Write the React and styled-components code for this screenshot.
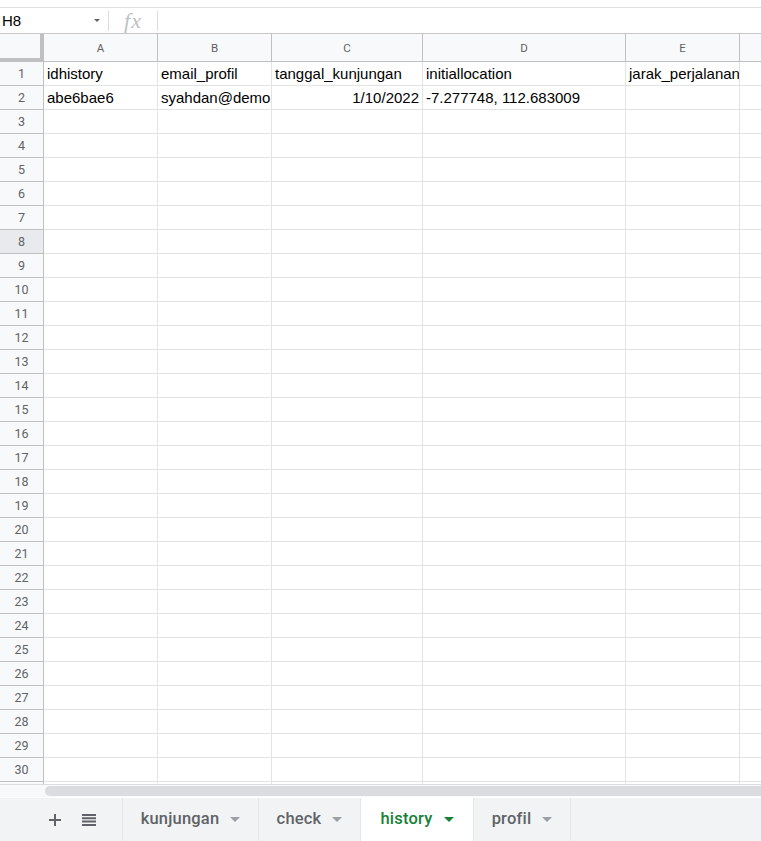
import React from "react";
import styled, { createGlobalStyle } from "styled-components";

const Global = createGlobalStyle`
  html, body { margin: 0; padding: 0; background: #fff; }
  body { font-family: "Liberation Sans", Arial, sans-serif; }
  * { box-sizing: border-box; }
`;

const Page = styled.div`
  width: 761px;
  height: 841px;
  display: flex;
  flex-direction: column;
  overflow: hidden;
  background: #fff;
`;

const TopSpace = styled.div`
  height: 8px;
  flex: none;
  border-bottom: 1px solid #e0e0e0;
`;

const FormulaBar = styled.div`
  height: 26px;
  flex: none;
  display: flex;
  align-items: center;
  border-bottom: 1px solid #c7c7c7;
`;

const NameBox = styled.div`
  width: 108px;
  height: 100%;
  display: flex;
  align-items: center;
  justify-content: space-between;
  padding: 0 8px 0 2px;
  font-family: "Liberation Sans", Arial, sans-serif;
  font-size: 15px;
  color: #000;
`;

const SmallCaret = styled.span`
  width: 0;
  height: 0;
  border-left: 3px solid transparent;
  border-right: 3px solid transparent;
  border-top: 3px solid #5f6368;
  display: inline-block;
`;

const Divider = styled.div`
  width: 1px;
  height: 20px;
  background: #dadce0;
`;

const Fx = styled.div`
  width: 48px;
  text-align: center;
  font-family: "Liberation Serif", "Times New Roman", serif;
  font-style: italic;
  font-size: 22px;
  color: #bdc1c6;
  line-height: 26px;
  letter-spacing: 1px;
`;

const GridArea = styled.div`
  flex: 1;
  overflow: hidden;
`;

const COLS = [114, 114, 151, 203, 114, 114];
const template = `44px ${COLS.map((c) => c + "px").join(" ")}`;

const Grid = styled.div`
  display: grid;
  grid-template-columns: ${template};
  grid-template-rows: 28px;
  grid-auto-rows: 24px;
`;

const Corner = styled.div`
  background: #f8f9fa;
  border-right: 4px solid #c0c0c0;
  border-bottom: 4px solid #c0c0c0;
`;

const ColHead = styled.div`
  background: #f8f9fa;
  border-right: 1px solid #c0c0c0;
  border-bottom: 1px solid #c0c0c0;
  display: flex;
  align-items: center;
  justify-content: center;
  font-family: Roboto, "Liberation Sans", sans-serif;
  font-size: 11.5px;
  color: #5f6368;
  padding-top: 1px;
`;

const RowHead = styled.div`
  background: ${(p) => (p.$active ? "#e8eaed" : "#f8f9fa")};
  border-right: 1px solid #c0c0c0;
  border-bottom: 1px solid #c0c0c0;
  display: flex;
  align-items: center;
  justify-content: center;
  font-family: Roboto, "Liberation Sans", sans-serif;
  font-size: 12.5px;
  color: #5f6368;
`;

const Cell = styled.div`
  border-right: 1px solid #e2e3e3;
  border-bottom: 1px solid #e2e3e3;
  padding: 0 3px;
  font-family: "Liberation Sans", Arial, sans-serif;
  font-size: 15px;
  color: #000;
  line-height: 23px;
  white-space: nowrap;
  overflow: hidden;
  text-align: ${(p) => (p.$right ? "right" : "left")};
`;

const ScrollTrack = styled.div`
  height: 14px;
  flex: none;
  display: flex;
  align-items: center;
  background: #f8f9fa;
  border-top: 1px solid #dadce0;
  border-bottom: 1px solid #fff;
  padding-left: 45px;
`;

const ScrollThumb = styled.div`
  flex: 1;
  height: 10px;
  background: #dadce0;
  border-radius: 5px 0 0 5px;
`;

const TabBar = styled.div`
  height: 43px;
  flex: none;
  background: #f1f3f4;
  display: flex;
  align-items: stretch;
`;

const Tools = styled.div`
  width: 123px;
  display: flex;
  align-items: center;
  padding-left: 48px;
  gap: 20px;
  border-right: 1px solid #e4e6e8;
`;

const Tab = styled.div`
  width: ${(p) => p.$w}px;
  display: flex;
  align-items: center;
  justify-content: center;
  gap: 11px;
  background: ${(p) => (p.$active ? "#fff" : "transparent")};
  border-right: 1px solid #e4e6e8;
  font-family: Roboto, "Open Sans", sans-serif;
  font-weight: 500;
  font-size: 16.5px;
  letter-spacing: 0.2px;
  color: ${(p) => (p.$active ? "#188038" : "#5f6368")};
  padding-bottom: 2px;
`;

const TabCaret = styled.span`
  width: 0;
  height: 0;
  border-left: 5px solid transparent;
  border-right: 5px solid transparent;
  border-top: 5px solid ${(p) => (p.$active ? "#188038" : "#9aa0a6")};
  margin-top: 2px;
`;

const data = {
  1: ["idhistory", "email_profil", "tanggal_kunjungan", "initiallocation", "jarak_perjalanan", ""],
  2: ["abe6bae6", "syahdan@demo.com", { v: "1/10/2022", r: true }, "-7.277748, 112.683009", "", ""],
};

export default function App() {
  const rows = [];
  for (let r = 1; r <= 31; r++) {
    rows.push(
      <RowHead key={"h" + r} $active={r === 8}>
        {r <= 30 ? r : ""}
      </RowHead>
    );
    COLS.forEach((_, c) => {
      const val = data[r] ? data[r][c] : "";
      const isObj = val && typeof val === "object";
      rows.push(
        <Cell key={r + "-" + c} $right={isObj && val.r}>
          {isObj ? val.v : val}
        </Cell>
      );
    });
  }
  return (
    <Page>
      <Global />
      <TopSpace />
      <FormulaBar>
        <NameBox>
          <span>H8</span>
          <SmallCaret />
        </NameBox>
        <Divider />
        <Fx>fx</Fx>
        <Divider />
      </FormulaBar>
      <GridArea>
        <Grid>
          <Corner />
          {["A", "B", "C", "D", "E", ""].map((l, i) => (
            <ColHead key={i}>{l}</ColHead>
          ))}
          {rows}
        </Grid>
      </GridArea>
      <ScrollTrack>
        <ScrollThumb />
      </ScrollTrack>
      <TabBar>
        <Tools>
          <svg width="14" height="14" viewBox="0 0 14 14">
            <path d="M7 1v12M1 7h12" stroke="#5f6368" strokeWidth="2" />
          </svg>
          <svg width="14" height="14" viewBox="0 0 14 14">
            <path d="M0 2h14M0 5.3h14M0 8.6h14M0 12h14" stroke="#5f6368" strokeWidth="2" />
          </svg>
        </Tools>
        <Tab $w={136}>
          kunjungan <TabCaret />
        </Tab>
        <Tab $w={102}>
          check <TabCaret />
        </Tab>
        <Tab $w={113} $active>
          history <TabCaret $active />
        </Tab>
        <Tab $w={97}>
          profil <TabCaret />
        </Tab>
      </TabBar>
    </Page>
  );
}
